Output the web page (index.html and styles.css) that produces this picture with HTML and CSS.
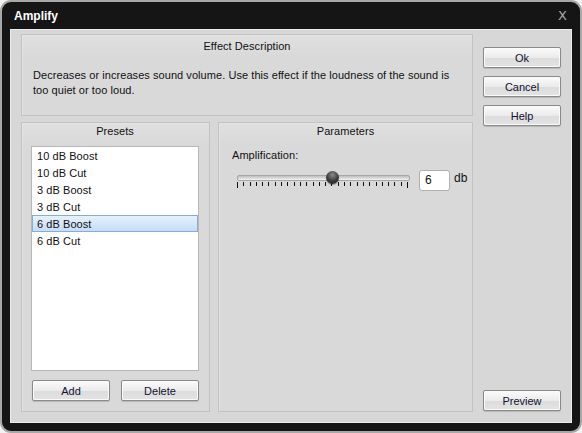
FILE: index.html
```html
<!DOCTYPE html>
<html>
<head>
<meta charset="utf-8">
<link rel="stylesheet" href="styles.css">
</head>
<body>
<div class="window">
  <div class="titlebar">
    <span class="title">Amplify</span>
    <span class="close">X</span>
  </div>
  <div class="content">
    <div class="main">
      <div class="group desc">
        <div class="gtitle">Effect Description</div>
        <p class="desc-text">Decreases or increases sound volume. Use this effect if the loudness of the sound is too quiet or too loud.</p>
      </div>
      <div class="row">
        <div class="group presets">
          <div class="gtitle">Presets</div>
          <ul class="list">
            <li>10 dB Boost</li>
            <li>10 dB Cut</li>
            <li>3 dB Boost</li>
            <li>3 dB Cut</li>
            <li class="sel">6 dB Boost</li>
            <li>6 dB Cut</li>
          </ul>
          <div class="pbtns">
            <button class="btn">Add</button>
            <button class="btn">Delete</button>
          </div>
        </div>
        <div class="group params">
          <div class="gtitle">Parameters</div>
          <div class="plabel">Amplification:</div>
          <div class="prow">
            <div class="slider">
              <div class="track"></div>
              <div class="thumb"></div>
              <svg class="ticks" width="172" height="6" viewBox="0 0 172 6">
                <path d="M0.5 0v6M6.5 0v4M13.5 0v4M19.5 0v4M25.5 0v4M31.5 0v4M38.5 0v4M44.5 0v4M50.5 0v4M57.5 0v4M63.5 0v4M69.5 0v4M76.5 0v4M82.5 0v4M88.5 0v4M94.5 0v4M101.5 0v4M107.5 0v4M113.5 0v4M120.5 0v4M126.5 0v4M132.5 0v4M139.5 0v4M145.5 0v4M151.5 0v4M157.5 0v4M164.5 0v4M170.5 0v6" stroke="#111" stroke-width="1"/>
              </svg>
            </div>
            <div class="tbox">6</div>
            <span class="unit">db</span>
          </div>
        </div>
      </div>
    </div>
    <div class="side">
      <button class="btn">Ok</button>
      <button class="btn">Cancel</button>
      <button class="btn">Help</button>
      <div class="spacer"></div>
      <button class="btn">Preview</button>
    </div>
  </div>
</div>
</body>
</html>
```

FILE: styles.css
```css
* { box-sizing: border-box; }
html, body { margin: 0; padding: 0; background: #f2f2f2; }
body {
  font-family: "Liberation Sans", Arial, sans-serif;
  font-size: 11px;
  letter-spacing: 0.06px;
  color: #111;
  width: 582px;
  height: 433px;
  overflow: hidden;
}
.window {
  width: 582px;
  height: 433px;
  background: #151515;
  border: 2px solid #a8a8a8;
  border-radius: 11px;
  display: flex;
  flex-direction: column;
}
.titlebar {
  height: 29px;
  display: flex;
  align-items: center;
  justify-content: space-between;
  padding: 0 13px 0 12px;
}
.title {
  color: #fff;
  font-weight: bold;
  font-size: 12px;
  letter-spacing: 0;
}
.close {
  color: #a9a9a9;
  font-size: 13px;
  font-family: "DejaVu Sans", sans-serif;
}
.content {
  flex: 1;
  margin: 0 8px 8px 8px;
  border: 1px solid #ececec;
  background: #d7d7d7;
  display: flex;
  padding: 4px 12px 10px 10px;
  gap: 10px;
}
.main {
  width: 452px;
  flex-shrink: 0;
  display: flex;
  flex-direction: column;
  gap: 6px;
}
.group {
  border: 1px solid #c2c2c2;
  box-shadow: inset 1px 1px 0 #e4e4e4;
  background: linear-gradient(#e0e0e0, #d9d9d9 22px, #d9d9d9);
}
.gtitle {
  text-align: center;
}
.desc { height: 82px; }
.desc .gtitle {
  padding-top: 4px;
  height: 22px;
  line-height: 15px;
}
.desc-text {
  margin: 11px 0 0 11px;
  line-height: 15px;
  width: 430px;
}
.row {
  flex: 1;
  display: flex;
  gap: 8px;
}
.presets {
  width: 189px;
  flex-shrink: 0;
  display: flex;
  flex-direction: column;
  padding: 0 10px 10px 9px;
}
.presets .gtitle, .params .gtitle {
  height: 23px;
  padding-top: 1px;
  line-height: 15px;
}
.list {
  list-style: none;
  margin: 0;
  padding: 0;
  height: 225px;
  background: #fff;
  border: 1px solid #b7b7b7;
}
.list li {
  height: 17px;
  padding-top: 1px;
  line-height: 14px;
  padding-left: 4px;
  border: 1px solid transparent;
}
.list li.sel {
  background: linear-gradient(#e6f1fc, #c5ddf6);
  border-color: #84acdd;
}
.pbtns {
  display: flex;
  justify-content: space-between;
  margin-top: 9px;
  padding: 0 0 0 1px;
}
.pbtns .btn { width: 78px; }
.params {
  flex: 1;
  min-width: 0;
  padding: 0 0 0 13px;
}
.params .gtitle { margin-left: -13px; }
.plabel {
  margin-top: 2px;
  height: 14px;
  line-height: 14px;
}
.prow {
  display: flex;
  margin-top: 8px;
  height: 21px;
}
.slider {
  position: relative;
  width: 178px;
  flex-shrink: 0;
  padding-left: 5px;
}
.track {
  margin-top: 5px;
  height: 6px;
  width: 173px;
  background: linear-gradient(#bdbdbd, #f4f4f4);
  border: 1px solid #a6a6a6;
  border-radius: 2px;
}
.thumb {
  position: absolute;
  left: 94px;
  top: 1px;
  width: 13px;
  height: 13px;
  border-radius: 50%;
  background: radial-gradient(circle at 50% 30%, #8a8a8a, #3a3a3a 55%, #1e1e1e);
  box-shadow: 0 1px 1px rgba(0,0,0,.35);
}
.ticks {
  display: block;
  margin-top: 1px;
}
.tbox {
  margin-left: 9px;
  width: 31px;
  height: 21px;
  flex-shrink: 0;
  background: #fff;
  border: 1px solid #b0b0b0;
  border-radius: 3px;
  padding-left: 5px;
  line-height: 19px;
  font-size: 12px;
}
.unit {
  margin-left: 4px;
  line-height: 16px;
  font-size: 12px;
}
.side {
  flex: 1;
  display: flex;
  flex-direction: column;
  padding-top: 13px;
  padding-bottom: 1px;
  gap: 8px;
}
.spacer { flex: 1; }
.btn {
  font-family: "Liberation Sans", Arial, sans-serif;
  font-size: 11px;
  color: #111133;
  width: 78px;
  height: 21px;
  padding: 0;
  border: 1px solid #8a8a8a;
  border-radius: 2px;
  background: linear-gradient(#fbfbfb, #ebebeb 50%, #dcdcdc 51%, #e3e3e3);
  box-shadow: inset 0 0 0 1px #fafafa, 0 1px 1px rgba(0,0,0,.15);
}
```
